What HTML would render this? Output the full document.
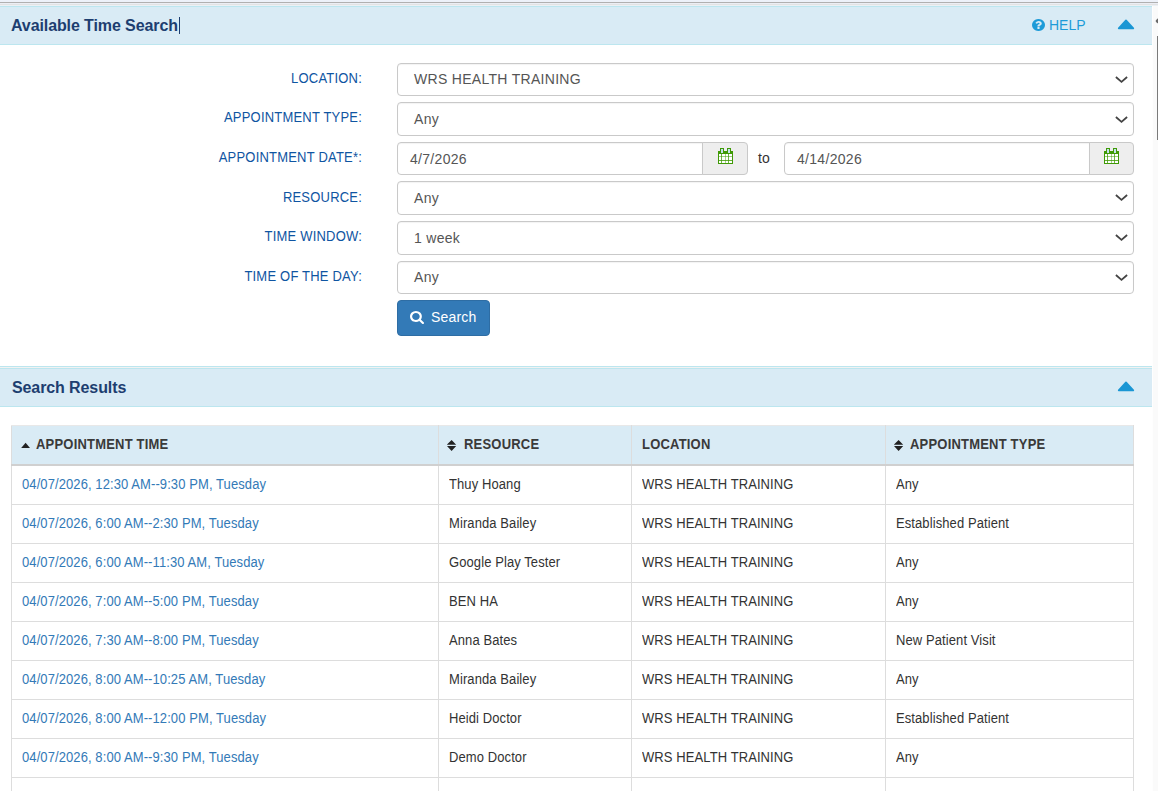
<!DOCTYPE html>
<html><head><meta charset="utf-8">
<style>
*{box-sizing:border-box;margin:0;padding:0}
html,body{width:1158px;height:791px;overflow:hidden;background:#fff;font-family:"Liberation Sans",sans-serif;position:relative}
.abs{position:absolute}
.line{position:absolute;left:0;width:1158px;height:1px}
.hdr{position:absolute;left:0;width:1152px;background:#d9ebf5;border-top:1px solid #bce6ef;border-bottom:1px solid #bce6ef}
.ttl{position:absolute;left:11px;font-weight:bold;font-size:16px;color:#1d3e70;white-space:nowrap;line-height:16px}
.lbl{position:absolute;right:796px;font-size:13px;letter-spacing:0.2px;color:#0f55a2;white-space:nowrap;line-height:20px;text-align:right;transform:scaleY(1.1);transform-origin:0 14px;margin-top:1px}
.sel,.inp{position:absolute;height:33px;border:1px solid #c9c9c9;background:#fff;box-shadow:inset 0 1px 1px rgba(0,0,0,.05)}
.sel{left:397px;width:737px;border-radius:4px}
.inp{border-radius:4px 0 0 4px}
.stxt{position:absolute;left:414px;font-size:14px;line-height:20px;color:#555;white-space:nowrap;letter-spacing:0.3px}
.chev{position:absolute;left:1115px;height:8px}
.chev svg{display:block}
.addon{position:absolute;height:33px;width:46px;border:1px solid #c9c9c9;background:#eee;border-radius:0 4px 4px 0}
.calw{position:absolute;width:16px;height:17px}
.calw svg{display:block}
.ttxt{position:absolute;left:758px;margin-top:6px;font-size:14px;line-height:20px;color:#333}
table{position:absolute;left:11px;top:425px;width:1123px;border-collapse:collapse;font-size:13px;letter-spacing:0.09px;table-layout:fixed}
td,th{border:1px solid #ddd;text-align:left;white-space:nowrap;padding:0 10px;height:39px;overflow:hidden}
th{background:#d9ebf5;height:39px;border-bottom:2px solid #d0d0d0;border-top-color:#e8e8e8}
td{color:#333;vertical-align:top;padding-top:9px;line-height:20px}
.r1 td{height:40px}
td a{color:#337ab7;text-decoration:none}
td a,td span{display:inline-block;transform:scaleY(1.1);transform-origin:0 14px}
.th{position:absolute;top:435px;letter-spacing:0.2px;font-size:13px;transform:scaleY(1.1);transform-origin:0 14px;font-weight:bold;color:#3a3a3a;line-height:20px;white-space:nowrap}
.si{position:absolute}
.si svg{display:block}
</style></head><body>
<div class="line" style="top:0;height:2px;background:#edf1f9"></div>
<div class="line" style="top:2px;background:#b0b0b0"></div>
<div class="line" style="top:3px;background:#eceef5"></div>
<div class="line" style="top:4px;background:#e2e3e3"></div>
<div class="line" style="top:5px;background:#ecf0f5"></div>

<div class="abs" style="left:1152px;top:6px;width:6px;height:785px;background:#fafafa;border-left:1px solid #fefefe"></div>
<svg class="abs" style="left:1154px;top:17px" width="4" height="9" viewBox="0 0 4 9"><path d="M1.6 4 Q1.6 3.5 2.4 2.7 L5 0.5 L5 7.3 L2.4 5.2 Q1.6 4.5 1.6 4 Z" fill="#6a6a6a"/></svg>
<div class="abs" style="left:1157px;top:36px;width:1px;height:104px;background:#7a7a7a"></div>

<div class="hdr" style="top:6px;height:39px"></div>
<div class="ttl" style="top:18px;letter-spacing:-0.1px">Available Time Search</div>
<div class="abs" style="left:179px;top:17px;width:1px;height:17px;background:#1d3e70"></div>
<svg class="abs" style="left:1032px;top:19px" width="13" height="12" viewBox="0 128 1536 1536" preserveAspectRatio="none"><path fill="#1d9bd8" d="M896 1376v-192q0-14-9-23t-23-9h-192q-14 0-23 9t-9 23v192q0 14 9 23t23 9h192q14 0 23-9t9-23zm256-672q0-88-55.5-163t-138.5-116-170-41q-243 0-371 213-15 24 8 42l132 100q7 6 19 6 16 0 25-12 53-68 86-92 34-24 86-24 48 0 85.5 26t37.5 59q0 38-20 61t-68 45q-63 28-115.5 86.5t-52.5 125.5v36q0 14 9 23t23 9h192q14 0 23-9t9-23q0-19 21.5-49.5t54.5-49.5q32-18 49-28.5t46-35 44.5-48 28-60.5 12.5-81zm384 192q0 209-103 385.5t-279.5 279.5-385.5 103-385.5-103-279.5-279.5-103-385.5 103-385.5 279.5-279.5 385.5-103 385.5 103 279.5 279.5 103 385.5z"/></svg>
<div class="abs" style="left:1049px;top:15px;font-size:14px;line-height:20px;color:#1d9bd8;letter-spacing:0px">HELP</div>
<svg class="abs" style="left:1117px;top:19px" width="18" height="11" viewBox="0 0 18 11"><path d="M9 1.4 L16.3 9.3 L1.7 9.3 Z" fill="#1a96d4" stroke="#1a96d4" stroke-width="1.7" stroke-linejoin="round"/></svg>

<div class="lbl" style="top:68px">LOCATION:</div>
<div class="sel" style="top:63px;height:33px"></div><div class="stxt" style="top:69px">WRS HEALTH TRAINING</div><div class="chev" style="top:76px"><svg width="14" height="8" viewBox="0 0 14 8"><path d="M0.9 1 L6.5 5.9 L12.1 1" fill="none" stroke="#444" stroke-width="1.8"/></svg></div>
<div class="lbl" style="top:107px">APPOINTMENT TYPE:</div>
<div class="sel" style="top:102px;height:34px"></div><div class="stxt" style="top:109px">Any</div><div class="chev" style="top:116px"><svg width="14" height="8" viewBox="0 0 14 8"><path d="M0.9 1 L6.5 5.9 L12.1 1" fill="none" stroke="#444" stroke-width="1.8"/></svg></div>
<div class="lbl" style="top:147px">APPOINTMENT DATE*:</div>
<div class="inp" style="top:142px;height:33px;left:397px;width:306px"></div><div class="stxt" style="top:149px;left:410px">4/7/2026</div>
<div class="addon" style="top:142px;height:33px;left:702px"></div><div class="calw" style="top:147px;left:718px"><svg width="16" height="17" viewBox="0 0 16 17" shape-rendering="crispEdges"><rect x="0" y="4" width="15" height="13" fill="#409a06" rx="0.6"/><rect x="2" y="1" width="4" height="4" fill="#409a06" rx="1"/><rect x="9" y="1" width="4" height="4" fill="#409a06" rx="1"/><rect x="3" y="2" width="2" height="4" fill="#c4e2ee"/><rect x="10" y="2" width="2" height="4" fill="#c4e2ee"/><rect x="1" y="7" width="13" height="9" fill="#fff"/><g fill="#409a06"><rect x="3" y="7" width="1" height="9" opacity="0.75"/><rect x="7" y="7" width="1" height="9" opacity="0.45"/><rect x="10" y="7" width="1" height="9" opacity="0.75"/><rect x="1" y="9" width="13" height="1" opacity="0.5"/><rect x="1" y="13" width="13" height="1" opacity="0.8"/></g></svg></div>
<div class="ttxt" style="top:142px">to</div>
<div class="inp" style="top:142px;height:33px;left:784px;width:306px"></div><div class="stxt" style="top:149px;left:797px">4/14/2026</div>
<div class="addon" style="top:142px;height:33px;left:1089px;width:45px"></div><div class="calw" style="top:147px;left:1104px"><svg width="16" height="17" viewBox="0 0 16 17" shape-rendering="crispEdges"><rect x="0" y="4" width="15" height="13" fill="#409a06" rx="0.6"/><rect x="2" y="1" width="4" height="4" fill="#409a06" rx="1"/><rect x="9" y="1" width="4" height="4" fill="#409a06" rx="1"/><rect x="3" y="2" width="2" height="4" fill="#c4e2ee"/><rect x="10" y="2" width="2" height="4" fill="#c4e2ee"/><rect x="1" y="7" width="13" height="9" fill="#fff"/><g fill="#409a06"><rect x="3" y="7" width="1" height="9" opacity="0.75"/><rect x="7" y="7" width="1" height="9" opacity="0.45"/><rect x="10" y="7" width="1" height="9" opacity="0.75"/><rect x="1" y="9" width="13" height="1" opacity="0.5"/><rect x="1" y="13" width="13" height="1" opacity="0.8"/></g></svg></div>
<div class="lbl" style="top:187px">RESOURCE:</div>
<div class="sel" style="top:181px;height:34px"></div><div class="stxt" style="top:188px">Any</div><div class="chev" style="top:194px"><svg width="14" height="8" viewBox="0 0 14 8"><path d="M0.9 1 L6.5 5.9 L12.1 1" fill="none" stroke="#444" stroke-width="1.8"/></svg></div>
<div class="lbl" style="top:226px">TIME WINDOW:</div>
<div class="sel" style="top:221px;height:34px"></div><div class="stxt" style="top:228px">1 week</div><div class="chev" style="top:234px"><svg width="14" height="8" viewBox="0 0 14 8"><path d="M0.9 1 L6.5 5.9 L12.1 1" fill="none" stroke="#444" stroke-width="1.8"/></svg></div>
<div class="lbl" style="top:266px">TIME OF THE DAY:</div>
<div class="sel" style="top:261px;height:33px"></div><div class="stxt" style="top:267px">Any</div><div class="chev" style="top:274px"><svg width="14" height="8" viewBox="0 0 14 8"><path d="M0.9 1 L6.5 5.9 L12.1 1" fill="none" stroke="#444" stroke-width="1.8"/></svg></div>

<div class="abs" style="left:397px;top:300px;width:93px;height:36px;background:#337ab7;border:1px solid #2e6da4;border-radius:4px"></div>
<svg class="abs" style="left:410px;top:311px" width="14" height="13" viewBox="0 0 1664 1664" preserveAspectRatio="none"><path fill="#fff" d="M1152 704q0-185-131.5-316.5t-316.5-131.5-316.5 131.5-131.5 316.5 131.5 316.5 316.5 131.5 316.5-131.5 131.5-316.5zm512 832q0 52-38 90t-90 38q-54 0-90-38l-343-342q-179 124-399 124-143 0-273.5-55.5t-225-150-150-225-55.5-273.5 55.5-273.5 150-225 225-150 273.5-55.5 273.5 55.5 225 150 150 225 55.5 273.5q0 220-124 399l343 343q37 37 37 90z"/></svg>
<div class="abs" style="left:431px;top:307px;font-size:14px;line-height:20px;color:#fff;letter-spacing:0.2px">Search</div>

<div class="line" style="top:366px;width:1152px;background:#bce6ef"></div>
<div class="line" style="top:367px;width:1152px;background:#f2f2f2"></div>
<div class="hdr" style="top:368px;height:39px"></div>
<div class="ttl" style="top:380px;left:12px;letter-spacing:-0.1px">Search Results</div>
<svg class="abs" style="left:1117px;top:381px" width="18" height="11" viewBox="0 0 18 11"><path d="M9 1.4 L16.3 9.3 L1.7 9.3 Z" fill="#1a96d4" stroke="#1a96d4" stroke-width="1.7" stroke-linejoin="round"/></svg>

<table>
<colgroup><col style="width:427px"><col style="width:193px"><col style="width:254px"><col></colgroup>
<tr><th></th><th></th><th></th><th></th></tr>
<tr class="r1"><td><a>04/07/2026, 12:30 AM--9:30 PM, Tuesday</a></td><td><span>Thuy Hoang</span></td><td><span>WRS HEALTH TRAINING</span></td><td><span>Any</span></td></tr>
<tr><td><a>04/07/2026, 6:00 AM--2:30 PM, Tuesday</a></td><td><span>Miranda Bailey</span></td><td><span>WRS HEALTH TRAINING</span></td><td><span>Established Patient</span></td></tr>
<tr><td><a>04/07/2026, 6:00 AM--11:30 AM, Tuesday</a></td><td><span>Google Play Tester</span></td><td><span>WRS HEALTH TRAINING</span></td><td><span>Any</span></td></tr>
<tr><td><a>04/07/2026, 7:00 AM--5:00 PM, Tuesday</a></td><td><span>BEN HA</span></td><td><span>WRS HEALTH TRAINING</span></td><td><span>Any</span></td></tr>
<tr><td><a>04/07/2026, 7:30 AM--8:00 PM, Tuesday</a></td><td><span>Anna Bates</span></td><td><span>WRS HEALTH TRAINING</span></td><td><span>New Patient Visit</span></td></tr>
<tr><td><a>04/07/2026, 8:00 AM--10:25 AM, Tuesday</a></td><td><span>Miranda Bailey</span></td><td><span>WRS HEALTH TRAINING</span></td><td><span>Any</span></td></tr>
<tr><td><a>04/07/2026, 8:00 AM--12:00 PM, Tuesday</a></td><td><span>Heidi Doctor</span></td><td><span>WRS HEALTH TRAINING</span></td><td><span>Established Patient</span></td></tr>
<tr><td><a>04/07/2026, 8:00 AM--9:30 PM, Tuesday</a></td><td><span>Demo Doctor</span></td><td><span>WRS HEALTH TRAINING</span></td><td><span>Any</span></td></tr>
<tr><td></td><td></td><td></td><td></td></tr>
</table>
<div class="si" style="left:21px;top:442px"><svg width="10" height="7" viewBox="0 0 10 7"><path d="M0.2 5.9 L4.6 0.8 L9 5.9 Z" fill="#222"/></svg></div>
<div class="th" style="left:36px">APPOINTMENT TIME</div>
<div class="si" style="left:447px;top:439px"><svg width="10" height="13" viewBox="0 0 10 13"><path d="M-0.1 5.7 L4.6 0.9 L9.2 5.7 Z M-0.1 7 L9.2 7 L4.6 12.1 Z" fill="#222"/></svg></div>
<div class="th" style="left:464px">RESOURCE</div>
<div class="th" style="left:642px">LOCATION</div>
<div class="si" style="left:894px;top:439px"><svg width="10" height="13" viewBox="0 0 10 13"><path d="M-0.1 5.7 L4.6 0.9 L9.2 5.7 Z M-0.1 7 L9.2 7 L4.6 12.1 Z" fill="#222"/></svg></div>
<div class="th" style="left:910px">APPOINTMENT TYPE</div>
</body></html>
